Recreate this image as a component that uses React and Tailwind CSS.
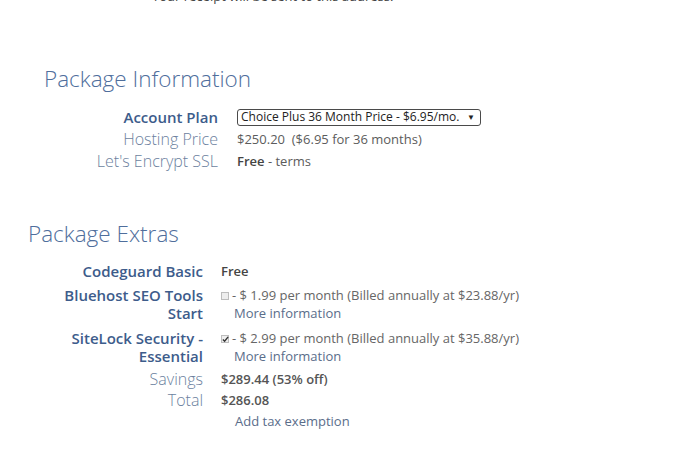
import React from "react";

const font = { fontFamily: '"Open Sans", "Liberation Sans", sans-serif' };

function Box({ checked }) {
  return (
    <span className="relative mr-[3px] inline-block h-[8px] w-[8px] translate-y-[-1px] border border-[#bdbdbd] bg-[#eeeeee] align-middle">
      {checked && (
        <svg viewBox="0 0 8 8" className="absolute left-0 top-0 h-[7px] w-[7px]">
          <path d="M1 4 L3 6 L7 1" fill="none" stroke="#333" strokeWidth="1.6" />
        </svg>
      )}
    </span>
  );
}

function InfoRow({ label, strong, children }) {
  return (
    <>
      <div
        className={
          strong
            ? "text-right text-[15px] font-semibold text-[#3d5c8b]"
            : "text-right text-[16px] font-light text-[#6c7f9e]"
        }
      >
        {label}
      </div>
      <div className="flex items-center text-[13px] text-[#5c5c5c]">{children}</div>
    </>
  );
}

export default function App() {
  return (
    <div className="h-[450px] w-[676px] overflow-hidden bg-white" style={font}>
      {/* receipt note, scrolled mostly out of view */}
      <div className="mt-[-12px] pl-[152px] text-[13px] leading-[16px] text-[#444]">
        Your receipt will be sent to this address.
      </div>

      {/* package information */}
      <h2 className="mt-[60px] pl-[44px] text-[22.5px] font-light leading-[30px] text-[#4f6e9c]">
        Package Information
      </h2>
      <div className="mt-[12px] grid grid-cols-[218px_1fr] gap-x-[19px] leading-[22px]">
        <InfoRow label="Account Plan" strong>
          <div className="flex h-[17px] w-[244px] items-center justify-between rounded-[3px] border border-[#4a4a4a] pl-[3px] pr-[5px] text-[12px] text-[#222]">
            <span>Choice Plus 36 Month Price - $6.95/mo.</span>
            <span className="text-[8px]">▼</span>
          </div>
        </InfoRow>
        <InfoRow label="Hosting Price">
          $250.20&nbsp;&nbsp;($6.95 for 36 months)
        </InfoRow>
        <InfoRow label="Let's Encrypt SSL">
          <span className="font-semibold text-[#444]">Free</span>
          <span>&nbsp;- terms</span>
        </InfoRow>
      </div>

      {/* package extras */}
      <h2 className="mt-[47px] pl-[28px] text-[22.5px] font-light leading-[30px] text-[#4f6e9c]">
        Package Extras
      </h2>
      <div className="mt-[13px] grid grid-cols-[150px_1fr] gap-x-[18px] gap-y-[6px] pl-[53px]">
        <div className="text-right text-[15px] font-semibold leading-[18px] text-[#3d5c8b]">
          Codeguard Basic
        </div>
        <div className="text-[13px] font-semibold leading-[18px] text-[#444]">Free</div>

        <div className="text-right text-[15px] font-semibold leading-[18px] text-[#3d5c8b]">
          Bluehost SEO Tools Start
        </div>
        <div className="text-[13px] leading-[18px] text-[#666]">
          <div>
            <Box />- $ 1.99 per month (Billed annually at $23.88/yr)
          </div>
          <div className="pl-[13px] text-[#5a6d8a]">More information</div>
        </div>

        <div className="mt-[1px] text-right text-[15px] font-semibold leading-[18px] text-[#3d5c8b]">
          SiteLock Security - Essential
        </div>
        <div className="mt-[1px] text-[13px] leading-[18px] text-[#666]">
          <div>
            <Box checked />- $ 2.99 per month (Billed annually at $35.88/yr)
          </div>
          <div className="pl-[13px] text-[#5a6d8a]">More information</div>
        </div>
      </div>
      <div className="mt-[4px] grid grid-cols-[150px_1fr] gap-x-[18px] pl-[53px] leading-[21px]">
        <div className="text-right text-[16px] font-light text-[#6c7f9e]">Savings</div>
        <div className="text-[13px] font-semibold text-[#555]">$289.44 (53% off)</div>
        <div className="text-right text-[16px] font-light text-[#6c7f9e]">Total</div>
        <div className="text-[13px] font-semibold text-[#555]">$286.08</div>
        <div />
        <div className="pl-[14px] text-[13px] leading-[20px] text-[#5a6d8a]">Add tax exemption</div>
      </div>
    </div>
  );
}
